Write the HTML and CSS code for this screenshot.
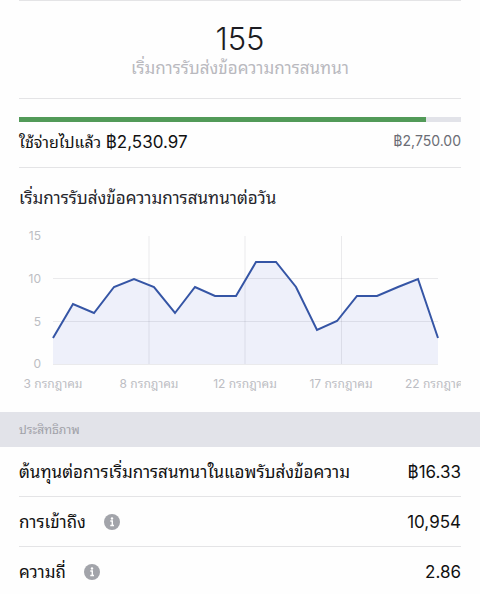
FILE: index.html
```html
<!DOCTYPE html>
<html lang="th">
<head>
  <meta charset="UTF-8" />
  <meta name="viewport" content="width=device-width, initial-scale=1" />
  <title>ประสิทธิภาพ</title>
  <link rel="stylesheet" href="styles.css">
</head>
<body>
  <main class="page">
    <section class="summary">
      <div class="summary-value">155</div>
      <div class="summary-label">เริ่มการรับส่งข้อความการสนทนา</div>
    </section>

    <section class="budget">
      <div class="bar"><div class="bar-fill" style="width: 92%"></div></div>
      <div class="budget-row">
        <div class="spent">ใช้จ่ายไปแล้ว <span class="amount">฿2,530.97</span></div>
        <div class="total">฿2,750.00</div>
      </div>
    </section>

    <section class="daily">
      <h2 class="daily-title">เริ่มการรับส่งข้อความการสนทนาต่อวัน</h2>
      <svg class="chart" viewBox="0 0 442 172" role="img" aria-label="เริ่มการรับส่งข้อความการสนทนาต่อวัน">
        <!-- area -->
        <polygon class="area" points="34,138 34,112 54,78 75,87 95,61 115,53 135,61 156,87 176,61 196,70 217,70 237,36 257,36 277,61 298,104 318,95 338,70 358,70 379,61 399,53 419,112 419,138" />
        <!-- grid -->
        <path class="grid" d="M34 52.500H419M34 95.500H419M34 138.500H419M130 10V138M226 10V138M322.500 10V138" />
        <!-- line -->
        <polyline class="line" points="34,112 54,78 75,87 95,61 115,53 135,61 156,87 176,61 196,70 217,70 237,36 257,36 277,61 298,104 318,95 338,70 358,70 379,61 399,53 419,112" />
        <g class="y-labels">
          <text x="22" y="14">15</text>
          <text x="22" y="57">10</text>
          <text x="22" y="100">5</text>
          <text x="22" y="142">0</text>
        </g>
        <g class="x-labels">
          <text x="34" y="162">3 กรกฎาคม</text>
          <text x="130" y="162">8 กรกฎาคม</text>
          <text x="226" y="162">12 กรกฎาคม</text>
          <text x="322" y="162">17 กรกฎาคม</text>
          <text x="419" y="162">22 กรกฎาคม</text>
        </g>
      </svg>
    </section>

    <h3 class="section-header">ประสิทธิภาพ</h3>
    <div class="metrics">
      <div class="metric">
        <span class="metric-name">ต้นทุนต่อการเริ่มการสนทนาในแอพรับส่งข้อความ</span>
        <span class="metric-value">฿16.33</span>
      </div>
      <div class="metric">
        <span class="metric-name">การเข้าถึง</span>
        <button class="info" type="button" aria-label="การเข้าถึง">
          <svg viewBox="0 0 16 16"><circle cx="8" cy="8" r="8" fill="#a2a4aa" /><circle cx="8" cy="4.500" r="1.200" fill="#fff" /><path d="M6.300 7H8.300V11.500M6.300 11.500H10" fill="none" stroke="#fff" stroke-width="1.400" /></svg>
        </button>
        <span class="metric-value">10,954</span>
      </div>
      <div class="metric">
        <span class="metric-name">ความถี่</span>
        <button class="info" type="button" aria-label="ความถี่">
          <svg viewBox="0 0 16 16"><circle cx="8" cy="8" r="8" fill="#a2a4aa" /><circle cx="8" cy="4.500" r="1.200" fill="#fff" /><path d="M6.300 7H8.300V11.500M6.300 11.500H10" fill="none" stroke="#fff" stroke-width="1.400" /></svg>
        </button>
        <span class="metric-value">2.86</span>
      </div>
    </div>
  </main>
</body>
</html>
```
FILE: styles.css
```css
* {
  box-sizing: border-box;
}
body {
  margin: 0;
  background: #fefefe;
  color: #111;
  font-family: Inter, "Noto Sans Thai Looped", Loma, Garuda, Waree, "Noto Sans Thai", sans-serif;
}
.summary {
  margin: 0 19px;
  padding: 20px 0 18px;
  border-top: 1px solid #e4e4e6;
  border-bottom: 1px solid #e4e4e6;
  text-align: center;
}
.summary-value {
  font-size: 31px;
  font-weight: 300;
  line-height: 35px;
  color: #1c1c22;
}
.summary-label {
  font-size: 17px;
  line-height: 24px;
  color: #b9b9be;
}
.budget {
  margin: 0 19px;
  padding-top: 18px;
  border-bottom: 1px solid #e4e4e6;
}
.bar {
  height: 5px;
  background: #e2e3e9;
}
.bar-fill {
  height: 100%;
  background: #529a58;
}
.budget-row {
  display: flex;
  justify-content: space-between;
  padding: 8px 0 13px;
}
.spent {
  font-size: 16px;
  line-height: 24px;
}
.amount {
  font-size: 17px;
}
.total {
  font-size: 14px;
  line-height: 22px;
  color: #6b6d75;
}
.daily {
  margin: 0 19px;
  padding: 18px 0 14px;
}
.daily-title {
  margin: 0 0 16px;
  font-size: 17px;
  font-weight: 400;
  line-height: 24px;
  color: #25252b;
}
.chart {
  display: block;
  width: 100%;
  overflow: hidden;
}
.area {
  fill: #eef0fa;
}
.grid {
  fill: none;
  stroke: #3c3c50;
  stroke-opacity: 0.1;
}
.line {
  fill: none;
  stroke: #3555a5;
  stroke-width: 2;
}
.y-labels {
  font-size: 12px;
  fill: #bcbdc3;
  text-anchor: end;
}
.x-labels {
  font-size: 12px;
  fill: #bcbdc3;
  text-anchor: middle;
}
.section-header {
  margin: 0;
  padding: 8px 19px 7px;
  background: #e2e3e9;
  font-size: 12px;
  font-weight: 400;
  line-height: 20px;
  color: #a0a1a8;
}
.metrics {
  margin: 0 19px;
}
.metric {
  display: flex;
  align-items: center;
  padding: 13px 0 12px;
  border-bottom: 1px solid #e4e4e6;
  line-height: 24px;
}
.metric:last-child {
  padding-bottom: 0;
  border-bottom: none;
}
.metric-name {
  font-size: 17px;
}
.metric-value {
  margin-left: auto;
  font-size: 17px;
}
.info {
  width: 16px;
  height: 16px;
  margin-left: 18px;
  padding: 0;
  border: none;
  background: none;
  cursor: pointer;
}
.info svg {
  display: block;
}
```
